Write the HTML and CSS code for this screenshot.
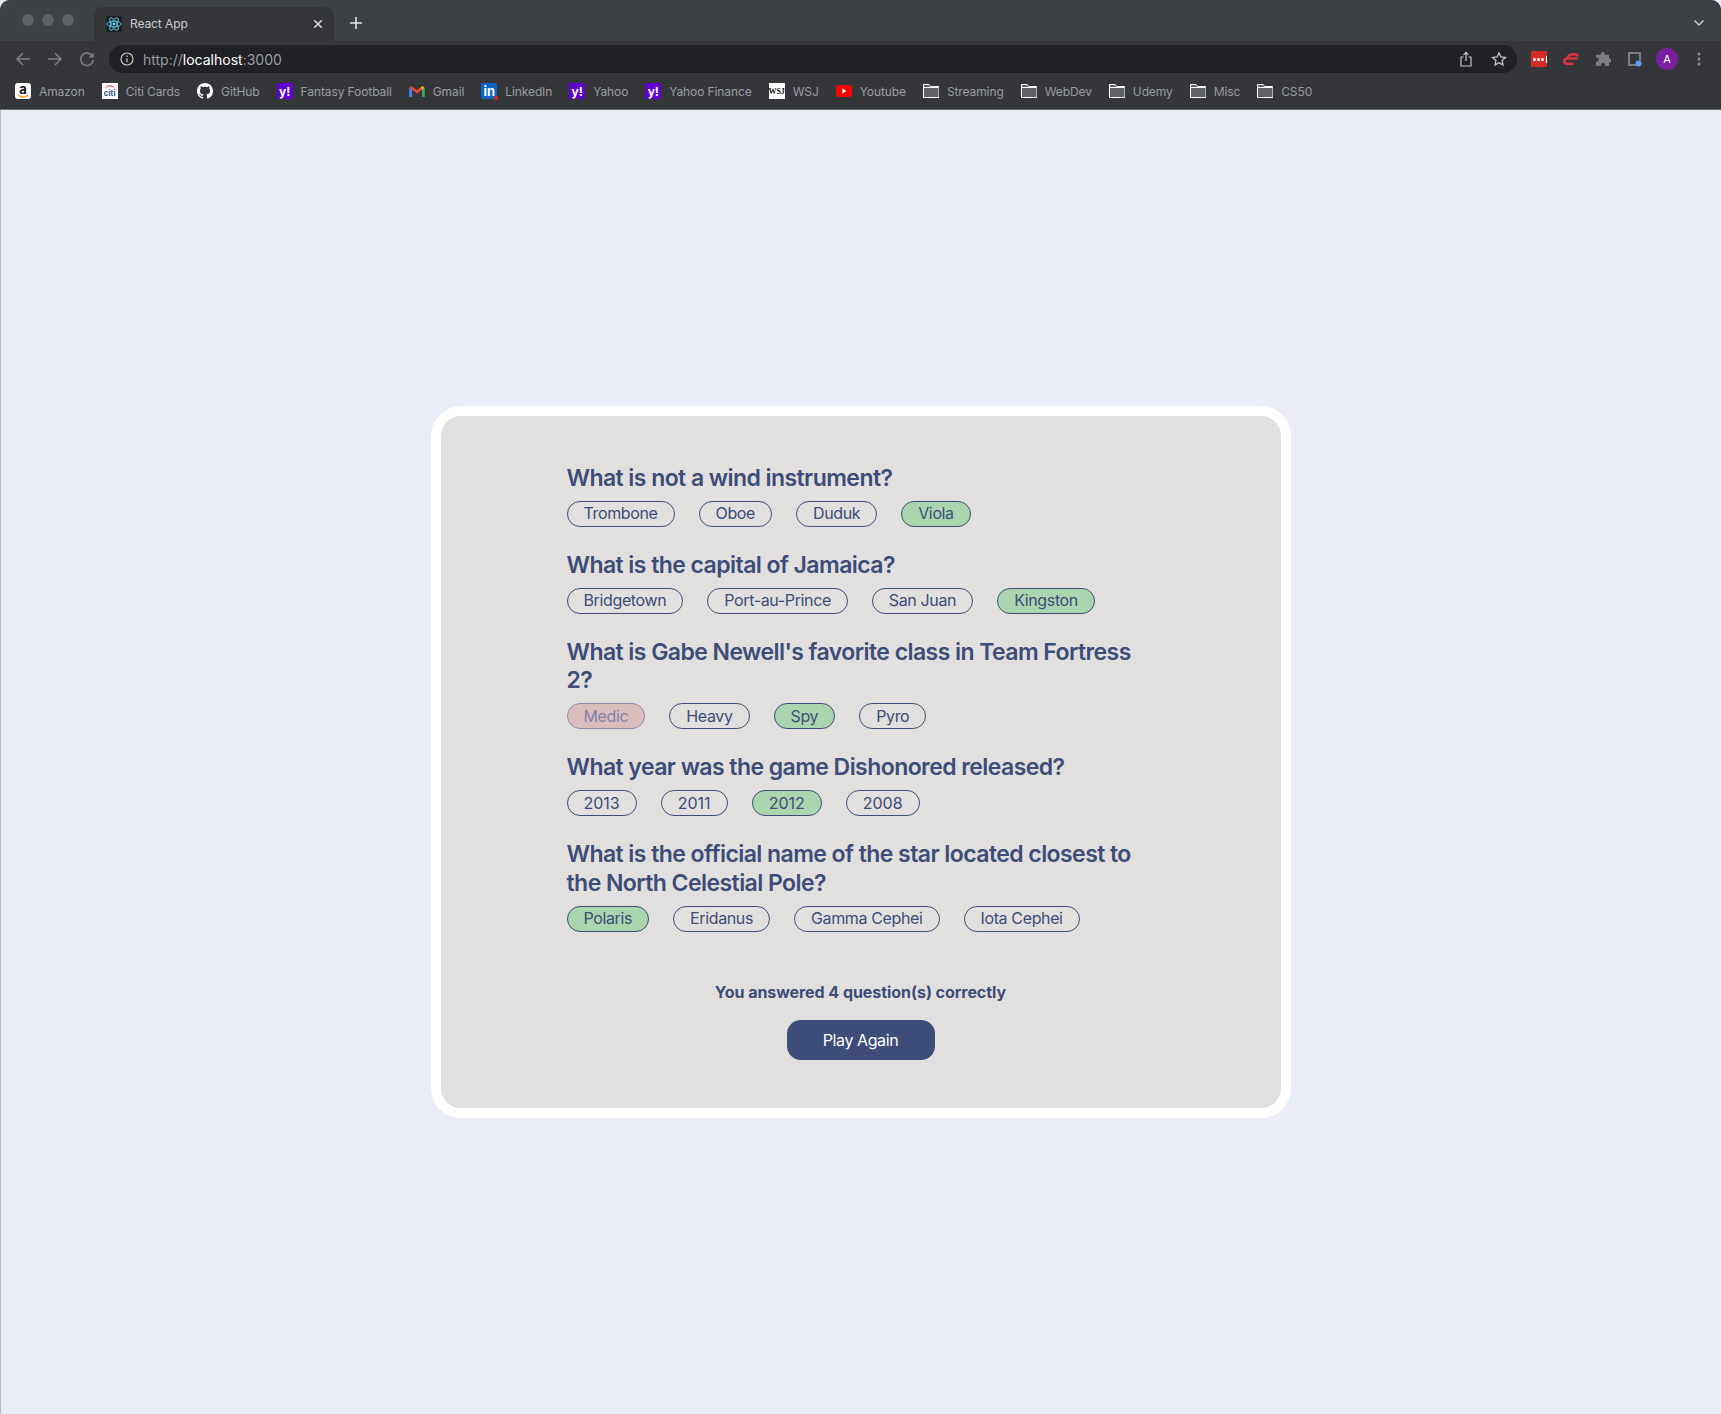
FILE: index.html
```html
<!DOCTYPE html>
<html lang="en">
<head>
  <meta charset="UTF-8">
  <title>React App</title>
  <link rel="stylesheet" href="styles.css">
</head>
<body>
  <svg class="defs" width="0" height="0">
    <symbol id="folder" viewBox="0 0 16 16">
      <path d="M.5 1.500h5.600l1.600 2h7.800a.5.500 0 0 1 .5.500v10.500h-15.500z" fill="#5f6165" stroke="#fff" stroke-width="1"/>
      <path d="M.5 4.500h15" stroke="#fff" stroke-width="1"/>
    </symbol>
  </svg>

  <header class="chrome">
    <div class="tabstrip">
      <div class="lights"><i></i><i></i><i></i></div>
      <div class="tab">
        <span class="react-tile">
          <svg width="16" height="16" viewBox="0 0 16 16" fill="none" stroke="#61dafb" stroke-width=".8">
            <ellipse cx="8" cy="8" rx="7" ry="2.800"/>
            <ellipse cx="8" cy="8" rx="7" ry="2.800" transform="rotate(60 8 8)"/>
            <ellipse cx="8" cy="8" rx="7" ry="2.800" transform="rotate(120 8 8)"/>
            <circle cx="8" cy="8" r="1.400" fill="#61dafb" stroke="none"/>
          </svg>
        </span>
        <span class="tab-title">React App</span>
        <svg class="tab-close" width="10" height="10" viewBox="0 0 10 10" stroke="#d6d8da" stroke-width="1.500"><path d="M1.200 1.200l7.600 7.600M8.800 1.200l-7.600 7.600"/></svg>
      </div>
      <svg class="new-tab" width="14" height="14" viewBox="0 0 14 14" stroke="#e3e4e6" stroke-width="1.600"><path d="M7 1v12M1 7h12"/></svg>
      <svg class="tab-list" width="12" height="8" viewBox="0 0 12 8" fill="none" stroke="#c8cacc" stroke-width="1.500"><path d="M1.500 1.500l4.500 4.500 4.500-4.500"/></svg>
    </div>

    <div class="toolbar">
      <span class="tool"><svg width="16" height="16" viewBox="0 0 16 16" fill="none" stroke="#7d7f83" stroke-width="1.600"><path d="M15 8H2M8 2L2 8l6 6"/></svg></span>
      <span class="tool"><svg width="16" height="16" viewBox="0 0 16 16" fill="none" stroke="#7d7f83" stroke-width="1.600"><path d="M1 8h13M8 2l6 6-6 6"/></svg></span>
      <span class="tool"><svg width="16" height="16" viewBox="0 0 16 16" fill="none" stroke="#7d7f83" stroke-width="1.600"><path d="M13.600 5.200A6.300 6.300 0 1 0 14.300 9"/><path d="M14.600 1.400v5h-5z" fill="#7d7f83" stroke="none"/></svg></span>
      <div class="omnibox">
        <svg class="info" width="14" height="14" viewBox="0 0 14 14" fill="none" stroke="#c4c6c9" stroke-width="1.200"><circle cx="7" cy="7" r="6"/><path d="M7 6.200v4M7 3.600v1.300"/></svg>
        <span class="url">http://<b>localhost</b>:3000</span>
        <svg class="omni-icon" width="14" height="16" viewBox="0 0 14 16" fill="none" stroke="#c4c6c9" stroke-width="1.200"><path d="M4.500 6H2v9h10V6H9.500M7 10V1.500M4.500 3.800L7 1.300l2.500 2.500"/></svg>
        <svg class="omni-icon" width="16" height="16" viewBox="0 0 16 16" fill="none" stroke="#c4c6c9" stroke-width="1.300"><path d="M8 1.800l1.900 4.100 4.500.5-3.300 3 .9 4.500L8 11.700l-4 2.200.9-4.500-3.300-3 4.500-.5z"/></svg>
      </div>
      <span class="tool"><span class="lastpass"><i></i><i></i><i></i><u></u></span></span>
      <span class="tool"><svg width="16" height="12" viewBox="0 0 16 12" fill="none" stroke="#d9343f" stroke-width="2.600" stroke-linecap="round"><path d="M14.500 2.500C14.500 1.500 13 1.300 10.500 1.300 7 1.300 5.500 2.500 4.500 4.500M13.500 5.500H4C2.300 5.500 1.300 6.500 1.300 8S2.500 10.700 4 10.700H9.500"/></svg></span>
      <span class="tool"><svg width="16" height="16" viewBox="0 0 16 16" fill="#7d7f83"><path d="M5.800 3a2 2 0 0 1 4 0v.8h3.400a.8.800 0 0 1 .8.800v2.800h.2a2.100 2.100 0 0 1 0 4.200H14v2.600a.8.800 0 0 1-.8.800h-3V14a2.100 2.100 0 0 0-4.200 0v1H1.800a.8.800 0 0 1-.8-.8v-3.400h.6a2.200 2.200 0 0 0 0-4.400H1V4.600a.8.800 0 0 1 .8-.8h4z"/></svg></span>
      <span class="tool"><svg width="16" height="16" viewBox="0 0 16 16"><path d="M1 1h13v8.500h-2V3H3v10h6v2H1z" fill="#7d7f83"/><circle cx="11.500" cy="12.500" r="3" fill="#5b9df9"/></svg></span>
      <span class="tool"><span class="avatar">A</span></span>
      <span class="tool"><svg width="4" height="14" viewBox="0 0 4 14" fill="#8a8c90"><circle cx="2" cy="2" r="1.500"/><circle cx="2" cy="7" r="1.500"/><circle cx="2" cy="12" r="1.500"/></svg></span>
    </div>

    <nav class="bookmarks">
      <a class="mark">
        <span class="tile tile-amazon">a
          <svg class="tile-mark" width="12" height="5" viewBox="0 0 12 5" fill="none" stroke="#f90" stroke-width="1.400"><path d="M1 1c3 2.500 7 2.500 10 .2"/></svg>
        </span>
        Amazon
      </a>
      <a class="mark">
        <span class="tile tile-citi">citi
          <svg class="tile-arc" width="12" height="5" viewBox="0 0 12 5" fill="none" stroke="#e1251b" stroke-width="1"><path d="M1.500 4C4 1 8 1 10.500 4"/></svg>
        </span>
        Citi Cards
      </a>
      <a class="mark">
        <svg width="16" height="16" viewBox="0 0 16 16" fill="#fff"><path d="M8 0C3.580 0 0 3.580 0 8c0 3.540 2.290 6.530 5.470 7.590.4.07.55-.17.55-.38 0-.19-.01-.82-.01-1.490-2.010.37-2.530-.49-2.690-.94-.09-.23-.48-.94-.82-1.130-.28-.15-.68-.52-.01-.53.63-.01 1.080.58 1.230.82.72 1.210 1.870.87 2.330.66.07-.52.28-.87.51-1.070-1.780-.2-3.640-.89-3.640-3.950 0-.87.31-1.590.82-2.150-.08-.2-.36-1.020.08-2.120 0 0 .67-.21 2.200.82.64-.18 1.320-.27 2-.27s1.360.09 2 .27c1.530-1.040 2.200-.82 2.200-.82.44 1.100.16 1.920.08 2.120.51.56.82 1.270.82 2.150 0 3.070-1.870 3.750-3.650 3.950.29.25.54.73.54 1.480 0 1.070-.01 1.930-.01 2.200 0 .21.15.46.55.38A8.010 8.010 0 0 0 16 8c0-4.420-3.580-8-8-8z"/></svg>
        GitHub
      </a>
      <a class="mark"><span class="tile tile-yahoo">y!</span>Fantasy Football</a>
      <a class="mark">
        <svg width="16" height="16" viewBox="0 0 16 16" fill="none" stroke-width="2.800">
          <path d="M1.600 14V4.500" stroke="#4285f4"/>
          <path d="M14.400 14V4.500" stroke="#34a853"/>
          <path d="M1.600 4L8 8.800 14.400 4" stroke="#ea4335"/>
          <path d="M12.400 5.500l2-1.500" stroke="#fbbc04"/>
        </svg>
        Gmail
      </a>
      <a class="mark"><span class="tile tile-linkedin">in<i></i></span>LinkedIn</a>
      <a class="mark"><span class="tile tile-yahoo">y!</span>Yahoo</a>
      <a class="mark"><span class="tile tile-yahoo">y!</span>Yahoo Finance</a>
      <a class="mark"><span class="tile tile-wsj">WSJ</span>WSJ</a>
      <a class="mark">
        <svg width="16" height="12" viewBox="0 0 16 12"><rect width="16" height="12" rx="3" fill="#f00"/><path d="M6.300 3.500v5l4.300-2.500z" fill="#fff"/></svg>
        Youtube
      </a>
      <a class="mark"><svg width="16" height="16"><use href="#folder"/></svg>Streaming</a>
      <a class="mark"><svg width="16" height="16"><use href="#folder"/></svg>WebDev</a>
      <a class="mark"><svg width="16" height="16"><use href="#folder"/></svg>Udemy</a>
      <a class="mark"><svg width="16" height="16"><use href="#folder"/></svg>Misc</a>
      <a class="mark"><svg width="16" height="16"><use href="#folder"/></svg>CS50</a>
    </nav>
  </header>

  <main class="page">
    <section class="card">
      <div class="quiz">
        <div class="question">
          <h3>What is not a wind instrument?</h3>
          <div class="answers">
            <span class="chip">Trombone</span>
            <span class="chip">Oboe</span>
            <span class="chip">Duduk</span>
            <span class="chip correct">Viola</span>
          </div>
        </div>
        <div class="question">
          <h3>What is the capital of Jamaica?</h3>
          <div class="answers">
            <span class="chip">Bridgetown</span>
            <span class="chip">Port-au-Prince</span>
            <span class="chip">San Juan</span>
            <span class="chip correct">Kingston</span>
          </div>
        </div>
        <div class="question">
          <h3>What is Gabe Newell's favorite class in Team Fortress 2?</h3>
          <div class="answers">
            <span class="chip wrong">Medic</span>
            <span class="chip">Heavy</span>
            <span class="chip correct">Spy</span>
            <span class="chip">Pyro</span>
          </div>
        </div>
        <div class="question">
          <h3>What year was the game Dishonored released?</h3>
          <div class="answers">
            <span class="chip num">2013</span>
            <span class="chip num">2011</span>
            <span class="chip num correct">2012</span>
            <span class="chip num">2008</span>
          </div>
        </div>
        <div class="question">
          <h3>What is the official name of the star located closest to the North Celestial Pole?</h3>
          <div class="answers">
            <span class="chip correct">Polaris</span>
            <span class="chip">Eridanus</span>
            <span class="chip">Gamma Cephei</span>
            <span class="chip">Iota Cephei</span>
          </div>
        </div>
      </div>
      <p class="score">You answered 4 question(s) correctly</p>
      <button class="play">Play Again</button>
    </section>
  </main>
</body>
</html>
```

FILE: styles.css
```css
* {
  box-sizing: border-box;
}
html, body {
  height: 100%;
}
body {
  margin: 0;
  display: flex;
  flex-direction: column;
  font-family: Inter, "Liberation Sans", sans-serif;
  background: #e9eef6;
}
.defs {
  display: none;
}

/* browser window */
.chrome {
  flex: none;
  height: 110px;
  background: #35363a;
  border-bottom: 1px solid #6b6d70;
  border-radius: 10px 10px 0 0;
  color: #9a9ca0;
  font-size: 12px;
  letter-spacing: -0.1px;
}
.tabstrip {
  height: 41px;
  display: flex;
  align-items: flex-end;
  background: #3e4144;
  border-radius: 10px 10px 0 0;
}
.lights {
  width: 94px;
  height: 41px;
  padding: 14px 0 0 22px;
  display: flex;
  gap: 8px;
}
.lights i {
  width: 12px;
  height: 12px;
  border-radius: 50%;
  background: #5e6164;
}
.tab {
  width: 240px;
  height: 34px;
  padding: 0 11px 0 12px;
  display: flex;
  align-items: center;
  background: #35363a;
  border-radius: 8px 8px 0 0;
}
.react-tile {
  width: 16px;
  height: 16px;
  background: #202124;
  border-radius: 2px;
  display: flex;
}
.tab-title {
  flex: 1;
  margin: 0 0 2px 8px;
  color: #c9cbce;
}
.new-tab {
  margin: 0 0 11px 15px;
}
.tab-list {
  margin: 0 16px 14px auto;
}
.toolbar {
  height: 34px;
  padding: 2px 6px 0 7px;
  display: flex;
  align-items: center;
}
.tool {
  width: 32px;
  height: 32px;
  flex: none;
  display: flex;
  align-items: center;
  justify-content: center;
}
.omnibox {
  flex: 1;
  height: 28px;
  margin: 0 6px;
  padding: 0 10px 0 11px;
  display: flex;
  align-items: center;
  background: #202124;
  border-radius: 14px;
}
.url {
  flex: 1;
  margin-left: 9px;
  font-size: 14px;
  letter-spacing: 0;
  color: #9a9ca0;
}
.url b {
  font-weight: 400;
  color: #fff;
}
.omni-icon {
  margin-left: 18px;
}
.lastpass {
  width: 16px;
  height: 16px;
  padding-left: 2px;
  display: flex;
  align-items: center;
  gap: 1px;
  background: #d32d27;
  border-radius: 1px;
}
.lastpass i {
  width: 3px;
  height: 3px;
  border-radius: 50%;
  background: #fff;
}
.lastpass u {
  width: 1px;
  height: 7px;
  margin-left: 1px;
  background: #fff;
}
.avatar {
  width: 22px;
  height: 22px;
  border-radius: 50%;
  display: flex;
  align-items: center;
  justify-content: center;
  background: #7b1fa2;
  color: #fff;
  font-size: 11px;
}

/* bookmarks bar */
.bookmarks {
  height: 34px;
  padding: 0 0 2px 15px;
  display: flex;
  align-items: center;
  gap: 17px;
}
.mark {
  display: flex;
  align-items: center;
  gap: 8px;
  white-space: nowrap;
}
.tile {
  position: relative;
  width: 16px;
  height: 16px;
  flex: none;
  display: flex;
  align-items: center;
  justify-content: center;
  color: #fff;
  font-weight: 700;
  letter-spacing: 0;
}
.tile-mark {
  position: absolute;
  left: 2px;
  bottom: 0;
}
.tile-arc {
  position: absolute;
  left: 2px;
  top: 1px;
}
.tile-amazon {
  background: #fff;
  border-radius: 3px;
  color: #111;
  font-size: 13px;
  padding-bottom: 4px;
}
.tile-citi {
  background: #fff;
  color: #0f3e91;
  font-size: 8px;
  font-weight: 600;
  padding-top: 3px;
}
.tile-yahoo {
  background: #6001d2;
  font-size: 12px;
}
.tile-linkedin {
  background: #0a66c2;
  border-radius: 2px;
  font-size: 13px;
}
.tile-linkedin i {
  position: absolute;
  right: -1px;
  bottom: -1px;
  width: 4px;
  height: 4px;
  border-radius: 50%;
  background: #e02020;
}
.tile-wsj {
  background: #fff;
  color: #111;
  font-family: "Liberation Serif", serif;
  font-size: 8px;
}

/* quiz card */
.page {
  flex: 1;
  display: flex;
  align-items: center;
  justify-content: center;
  box-shadow: inset 1px 0 0 #b9bcc2;
}
.card {
  width: 860px;
  padding: 48px 0;
  display: flex;
  flex-direction: column;
  align-items: center;
  background: #e2e0de;
  border: 10px solid #fff;
  border-radius: 30px;
  color: #3d4c78;
}
.quiz {
  width: 588px;
}
.question {
  margin-bottom: 24px;
}
.question h3 {
  margin: 0 0 8px;
  font-size: 23px;
  line-height: 28.8px;
  font-weight: 600;
  letter-spacing: -0.56px;
}
.answers {
  display: flex;
  gap: 24px;
}
.chip {
  padding: 2.5px 16px;
  border: 1px solid #3d4c78;
  border-radius: 13px;
  font-size: 16px;
  line-height: 19px;
  letter-spacing: -0.37px;
}
.num {
  letter-spacing: 0;
}
.correct {
  background: #a9d6af;
}
.wrong {
  background: #dcbdbd;
  border-color: #8e89a8;
  color: #7f84a8;
}
.score {
  margin: 27px 0 18.4px;
  font-size: 16px;
  line-height: 19px;
  font-weight: 700;
  letter-spacing: -0.05px;
}
.play {
  width: 148px;
  height: 40px;
  border: 0;
  border-radius: 14px;
  background: #3d4c78;
  color: #fff;
  font-family: inherit;
  font-size: 16px;
  font-weight: 400;
  letter-spacing: -0.4px;
}
```
